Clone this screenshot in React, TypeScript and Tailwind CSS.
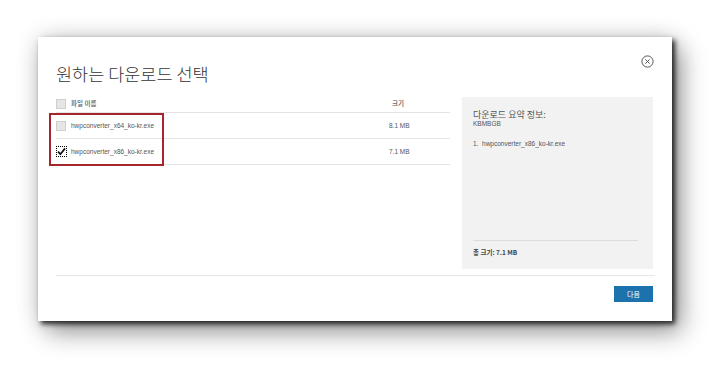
import React from "react";

// ─── Data ─────────────────────────────────────────────────────────────────────

const FILES = [
  { name: "hwpconverter_x64_ko-kr.exe", size: "8.1 MB", checked: false },
  { name: "hwpconverter_x86_ko-kr.exe", size: "7.1 MB", checked: true },
];

const KO = { fontFamily: '"Noto Sans CJK KR", "Noto Sans", sans-serif' };
const LAT = { fontFamily: '"Liberation Sans", "Noto Sans CJK KR", sans-serif' };

// ─── Pieces ───────────────────────────────────────────────────────────────────

function Checkbox({ checked }: { checked?: boolean }) {
  if (checked) {
    return (
      <span className="flex h-[11px] w-[11px] shrink-0 items-center justify-center border border-dotted border-black bg-white">
        <svg width="9" height="9" viewBox="0 0 9 9">
          <path d="M1 4.6 L3.4 7.2 L8 1.4" fill="none" stroke="#111" strokeWidth="1.7" />
        </svg>
      </span>
    );
  }
  return <span className="block h-[10px] w-[10px] shrink-0 border border-[#cfcfcf] bg-[#e6e6e6]" />;
}

function CloseIcon() {
  return (
    <svg width="13" height="13" viewBox="0 0 13 13">
      <circle cx="6.5" cy="6.5" r="5.6" fill="none" stroke="#555" strokeWidth="1" />
      <path d="M4.4 4.4 L8.6 8.6 M8.6 4.4 L4.4 8.6" stroke="#555" strokeWidth="1" />
    </svg>
  );
}

// ─── App ──────────────────────────────────────────────────────────────────────

export default function App() {
  return (
    <div className="h-[369px] w-[720px] overflow-hidden bg-white pl-[38px] pt-[37px]">
      <div
        className="relative flex h-[284px] w-[634px] flex-col bg-white pl-[18px] pr-[19px] pt-[25px] shadow-[3px_3px_5px_rgba(0,0,0,0.8),9px_11px_24px_rgba(0,0,0,0.4),0_0_22px_rgba(0,0,0,0.14)]"
      >
        {/* Close */}
        <button className="absolute right-[18px] top-[18px]">
          <CloseIcon />
        </button>

        {/* Title */}
        <h1 className="text-[17.5px] font-light leading-[24px] text-[#333]" style={KO}>
          원하는 다운로드 선택
        </h1>

        {/* Body */}
        <div className="mt-[11px] flex gap-[12px]">
          {/* File table */}
          <div className="w-[394px]">
            <div className="flex h-[16px] items-center border-b border-[#e4e4e4] pb-[1px]">
              <Checkbox />
              <span className="ml-[5px] flex-1 text-[6.5px] font-medium text-[#555]" style={KO}>파일 이름</span>
              <span className="w-[61px] pl-[3px] text-[6.5px] font-medium text-[#555]" style={KO}>크기</span>
            </div>
            {FILES.map(f => (
              <div key={f.name} className="flex h-[26px] items-center border-b border-[#e4e4e4]">
                <Checkbox checked={f.checked} />
                <span className={`${f.checked ? "ml-[4px]" : "ml-[5px]"} flex-1 text-[6.5px] text-[#555]`} style={LAT}>
                  {f.name}
                </span>
                <span className="w-[61px] text-[6.5px] text-[#555]" style={LAT}>{f.size}</span>
              </div>
            ))}
          </div>

          {/* Summary panel */}
          <div className="flex h-[172px] w-[191px] flex-col justify-between bg-[#f2f2f2] pl-[11px] pr-[15px]">
            <div className="pt-[12px]">
              <p className="text-[9px] leading-[11px] text-[#555]" style={KO}>다운로드 요약 정보:</p>
              <p className="text-[6.5px] leading-[8px] text-[#555]" style={LAT}>KBMBGB</p>
              <p className="mt-[11px] text-[6.5px] text-[#555]" style={LAT}>1.&nbsp; hwpconverter_x86_ko-kr.exe</p>
            </div>
            <div className="mb-[12px] border-t border-[#dcdcdc] pt-[7px] text-[6.5px] font-bold leading-[9px] text-[#444]" style={KO}>
              총 크기: 7.1 MB
            </div>
          </div>
        </div>

        {/* Footer */}
        <div className="mt-[6px] w-[599px] border-t border-[#e6e6e6]" />
        <div className="mt-[10px] flex justify-end">
          <button className="flex h-[16px] w-[39px] items-center justify-center bg-[#1c72ad] text-[7px] text-white" style={KO}>
            다음
          </button>
        </div>

        {/* Red highlight annotation */}
        <div className="pointer-events-none absolute left-[11px] top-[76px] h-[53px] w-[115px] border-2 border-[#a5262b]" />
      </div>
    </div>
  );
}
